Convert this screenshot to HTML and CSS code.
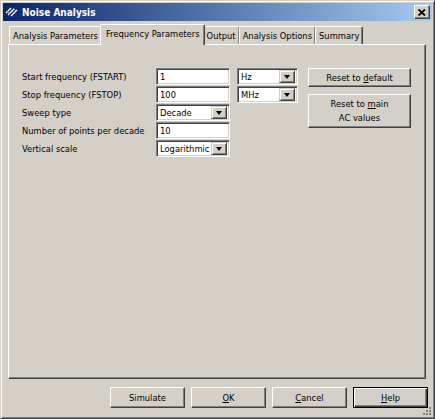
FILE: index.html
```html
<!DOCTYPE html>
<html>
<head>
<meta charset="utf-8">
<link rel="stylesheet" href="styles.css">
</head>
<body>
<div class="window">
  <div class="titlebar">
    <svg class="appicon" width="14" height="12" viewBox="0 0 14 12">
      <path d="M1 7 L6 2 M3 9 L9 3 M6 10 L12 4" stroke="#ffffff" stroke-width="1.3" fill="none"/>
      <path d="M2 5 L5 8 M5 3 L8 6 M8 2 L11 5" stroke="#8fb0ff" stroke-width="1" fill="none"/>
    </svg>
    <span class="title">Noise Analysis</span>
    <span class="close">
      <svg width="8" height="7" viewBox="0 0 8 7"><path d="M0.5 0.5 L7 6.5 M7 0.5 L0.5 6.5" stroke="#000" stroke-width="1.8"/></svg>
    </span>
  </div>
  <div class="client">
    <div class="tabs">
      <div class="tab first">Analysis Parameters</div>
      <div class="tab active">Frequency Parameters</div>
      <div class="tab">Output</div>
      <div class="tab">Analysis Options</div>
      <div class="tab">Summary</div>
    </div>
    <div class="panel">
      <div class="content">
        <div class="form">
          <div class="label">Start frequency (FSTART)</div>
          <div class="field">1</div>
          <div class="select"><span class="val">Hz</span><span class="arrow"></span></div>

          <div class="label">Stop frequency (FSTOP)</div>
          <div class="field">100</div>
          <div class="select"><span class="val">MHz</span><span class="arrow"></span></div>

          <div class="label">Sweep type</div>
          <div class="select"><span class="val">Decade</span><span class="arrow"></span></div>
          <div></div>

          <div class="label">Number of points per decade</div>
          <div class="field">10</div>
          <div></div>

          <div class="label">Vertical scale</div>
          <div class="select"><span class="val">Logarithmic</span><span class="arrow"></span></div>
          <div></div>
        </div>
        <div class="side">
          <div class="btn reset1"><span>Reset to <u>d</u>efault</span></div>
          <div class="btn reset2"><span>Reset to <u>m</u>ain<br>AC values</span></div>
        </div>
      </div>
    </div>
    <div class="buttons">
      <div class="btn bottom"><span>Simulate</span></div>
      <div class="btn bottom"><span><u>O</u>K</span></div>
      <div class="btn bottom"><span><u>C</u>ancel</span></div>
      <div class="btn bottom default"><span><u>H</u>elp</span></div>
    </div>
    <div class="grip"></div>
  </div>
</div>
</body>
</html>
```

FILE: styles.css
```css
* { box-sizing: border-box; }
html, body { margin: 0; padding: 0; }
body {
  width: 435px;
  height: 419px;
  overflow: hidden;
  background: #d4d0c8;
  font-family: "DejaVu Sans Condensed", "DejaVu Sans", sans-serif;
  font-size: 9.3px;
  color: #000;
}
.window {
  width: 435px;
  height: 419px;
  border: 1px solid;
  border-color: #d4d0c8 #404040 #404040 #d4d0c8;
  box-shadow: inset 1px 1px #ffffff, inset -1px -1px #808080;
  padding: 2px;
  position: relative;
  display: flex;
  flex-direction: column;
}
.titlebar {
  height: 18px;
  background: linear-gradient(to right, #0a246a, #a6caf0);
  display: flex;
  align-items: center;
  padding-left: 2px;
  padding-right: 2px;
}
.appicon { margin-right: 3px; }
.title {
  color: #fff;
  font-weight: bold;
  font-size: 10px;
  letter-spacing: 0;
  flex: 1;
}
.close {
  width: 16px;
  height: 14px;
  background: #d4d0c8;
  border: 1px solid;
  border-color: #ffffff #404040 #404040 #ffffff;
  box-shadow: inset -1px -1px #808080;
  display: flex;
  align-items: center;
  justify-content: center;
}
.client {
  flex: 1;
  padding: 3px 6px 0 5px;
  position: relative;
}
.tabs {
  display: flex;
  height: 20px;
  align-items: flex-end;
  padding-left: 1px;
  position: relative;
  z-index: 1;
}
.tab {
  height: 18px;
  padding: 3px 3px 0 3px;
  border: 1px solid;
  border-bottom: none;
  border-color: #ffffff #404040 transparent #ffffff;
  box-shadow: inset -1px 0 #808080;
  border-radius: 2px 2px 0 0;
  white-space: nowrap;
  margin-left: -1px;
}
.tab.first { margin-left: 0; }
.tab.active {
  height: 21px;
  margin-left: -2px;
  margin-right: -2px;
  padding: 3px 4px 0 5px;
  background: #d4d0c8;
  margin-bottom: -1px;
  z-index: 2;
  position: relative;
}
.tab.active + .tab { margin-left: 0; }
.panel {
  height: 335px;
  border: 1px solid;
  border-color: #ffffff #404040 #404040 #ffffff;
  box-shadow: inset -1px -1px #808080;
}
.content {
  display: flex;
  padding: 23px 0 0 13px;
}
.form {
  display: grid;
  grid-template-columns: 127px 74px 61px;
  grid-auto-rows: 17px;
  column-gap: 7px;
  row-gap: 1px;
  align-items: center;
}
.label { white-space: nowrap; }
.field, .select {
  height: 17px;
  background: #fff;
  border: 1px solid;
  border-color: #808080 #ffffff #ffffff #808080;
  box-shadow: inset 1px 1px #404040, inset -1px -1px #d4d0c8;
  padding: 2px 0 0 3px;
  line-height: 12px;
  white-space: nowrap;
}
.select {
  display: flex;
  padding: 2px 2px 2px 3px;
}
.select .val { flex: 1; }
.select .arrow {
  width: 16px;
  height: 13px;
  margin-top: -1px;
  background: #d4d0c8;
  border: 1px solid;
  border-color: #d4d0c8 #404040 #404040 #d4d0c8;
  box-shadow: inset 1px 1px #fff, inset -1px -1px #808080;
  position: relative;
}
.select .arrow::after {
  content: "";
  position: absolute;
  left: 4px;
  top: 4px;
  border-left: 3.5px solid transparent;
  border-right: 3.5px solid transparent;
  border-top: 4px solid #000;
}
.side {
  display: flex;
  flex-direction: column;
  gap: 7px;
  margin-left: 10px;
}
.btn {
  background: #d4d0c8;
  border: 1px solid;
  border-color: #ffffff #404040 #404040 #ffffff;
  box-shadow: inset -1px -1px #808080;
  text-align: center;
  display: flex;
  align-items: center;
  justify-content: center;
  line-height: 14px;
}
.reset1 { width: 103px; height: 19px; }
.reset2 { width: 103px; height: 34px; }
.buttons {
  display: flex;
  justify-content: flex-end;
  gap: 6px;
  margin-top: 8px;
  margin-right: -2px;
}
.btn.bottom { width: 75px; height: 21px; }
.btn.default {
  border: 1px solid #000;
  box-shadow: inset 1px 1px #fff, inset -1px -1px #404040, inset -2px -2px #808080;
}
u { text-decoration: underline; text-underline-offset: 1px; }
.grip {
  position: absolute;
  right: 0;
  bottom: 0;
  width: 10px;
  height: 10px;
  background:
    radial-gradient(circle at 8px 8px, #808080 1px, transparent 1.2px),
    radial-gradient(circle at 5px 8px, #808080 1px, transparent 1.2px),
    radial-gradient(circle at 8px 5px, #808080 1px, transparent 1.2px),
    radial-gradient(circle at 2px 8px, #808080 1px, transparent 1.2px),
    radial-gradient(circle at 5px 5px, #808080 1px, transparent 1.2px),
    radial-gradient(circle at 8px 2px, #808080 1px, transparent 1.2px);
}
```
